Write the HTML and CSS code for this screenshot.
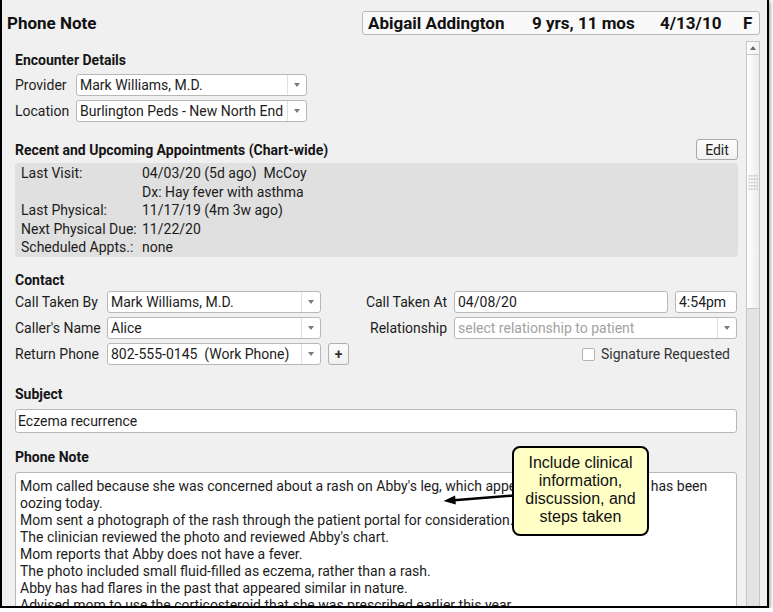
FILE: index.html
```html
<!DOCTYPE html>
<html>
<head>
<meta charset="utf-8">
<title>Phone Note</title>
<link rel="stylesheet" href="styles.css">
</head>
<body>
<div class="window">
  <header class="top">
    <h1 class="title">Phone Note</h1>
    <div class="patient">
      <span class="p-name">Abigail Addington</span>
      <span class="p-age">9 yrs, 11 mos</span>
      <span class="p-dob">4/13/10</span>
      <span class="p-sex">F</span>
    </div>
  </header>
  <div class="main">
    <div class="content">
      <h2 class="heading h-enc">Encounter Details</h2>
      <div class="enc-grid">
        <span class="lbl">Provider</span>
        <div class="select"><span class="sel-text">Mark Williams, M.D.</span><span class="sel-arrow"><i class="tri"></i></span></div>
        <span class="lbl">Location</span>
        <div class="select"><span class="sel-text">Burlington Peds - New North End</span><span class="sel-arrow"><i class="tri"></i></span></div>
      </div>

      <div class="appt-head">
        <h2 class="heading">Recent and Upcoming Appointments (Chart-wide)</h2>
        <button class="btn-edit">Edit</button>
      </div>
      <div class="appt-box">
        <span class="a-lbl">Last Visit:</span><span class="a-val">04/03/20 (5d ago)&nbsp; McCoy</span>
        <span class="a-lbl"></span><span class="a-val">Dx: Hay fever with asthma</span>
        <span class="a-lbl">Last Physical:</span><span class="a-val">11/17/19 (4m 3w ago)</span>
        <span class="a-lbl">Next Physical Due:</span><span class="a-val">11/22/20</span>
        <span class="a-lbl">Scheduled Appts.:</span><span class="a-val">none</span>
      </div>

      <h2 class="heading h-contact">Contact</h2>
      <div class="contact-grid">
        <span class="lbl">Call Taken By</span>
        <div class="select"><span class="sel-text">Mark Williams, M.D.</span><span class="sel-arrow"><i class="tri"></i></span></div>
        <span class="spacer"></span>
        <span class="spacer"></span>
        <span class="lbl lbl-r">Call Taken At</span>
        <div class="date-row">
          <div class="input in-date">04/08/20</div>
          <div class="input in-time">4:54pm</div>
        </div>

        <span class="lbl">Caller's Name</span>
        <div class="select"><span class="sel-text">Alice</span><span class="sel-arrow"><i class="tri"></i></span></div>
        <span class="spacer"></span>
        <span class="spacer"></span>
        <span class="lbl lbl-r">Relationship</span>
        <div class="select"><span class="sel-text placeholder">select relationship to patient</span><span class="sel-arrow"><i class="tri"></i></span></div>

        <span class="lbl">Return Phone</span>
        <div class="select"><span class="sel-text">802-555-0145&nbsp; (Work Phone)</span><span class="sel-arrow"><i class="tri"></i></span></div>
        <span class="spacer"></span>
        <button class="btn-plus">+</button>
        <span class="spacer"></span>
        <div class="sig"><span class="checkbox"></span><span>Signature Requested</span></div>
      </div>

      <h2 class="heading h-subject">Subject</h2>
      <div class="input in-subject">Eczema recurrence</div>

      <h2 class="heading h-note">Phone Note</h2>
      <div class="note">
        <p>Mom called because she was concerned about a rash on Abby's leg, which appeared yesterday, and it has been oozing today.</p>
        <p>Mom sent a photograph of the rash through the patient portal for consideration.</p>
        <p>The clinician reviewed the photo and reviewed Abby's chart.</p>
        <p>Mom reports that Abby does not have a fever.</p>
        <p>The photo included small fluid-filled as eczema, rather than a rash.</p>
        <p>Abby has had flares in the past that appeared similar in nature.</p>
        <p>Advised mom to use the corticosteroid that she was prescribed earlier this year.</p>
      </div>
    </div>
    <div class="scrollbar">
      <div class="sb-up"><i class="sb-tri"></i></div>
      <div class="sb-thumb"><div class="sb-grip"></div></div>
      <div class="sb-track"></div>
    </div>
  </div>

  <svg class="callout-arrow" width="76" height="18" viewBox="0 0 76 18">
    <line x1="74" y1="5.5" x2="14" y2="10.3" stroke="#000" stroke-width="2.6"/>
    <polygon points="3.5,11 15.8,14.6 15.1,5.6" fill="#000"/>
  </svg>
  <div class="callout">Include clinical information, discussion, and steps taken</div>
</div>
</body>
</html>
```

FILE: styles.css
```css
* { box-sizing: border-box; }

html, body {
  margin: 0;
  padding: 0;
  background: #ffffff;
}

body {
  font-family: Roboto, "Liberation Sans", sans-serif;
  font-size: 14px;
  color: #1c1c1c;
}

.window {
  position: relative;
  width: 769px;
  height: 608px;
  background: #f0f0f0;
  border: 2px solid #000;
  border-top: 0;
  box-shadow: 1px 1px 4px rgba(0, 0, 0, 0.45);
  overflow: hidden;
  display: flex;
  flex-direction: column;
}

/* header */
.top {
  flex: none;
  height: 35px;
  display: flex;
  justify-content: space-between;
  align-items: flex-start;
  padding: 11px 7px 0 5px;
}

.title {
  margin: 0;
  font-size: 17px;
  font-weight: 700;
  line-height: 24px;
  color: #111;
}

.patient {
  width: 398px;
  height: 24px;
  display: flex;
  align-items: center;
  padding-left: 5px;
  background: #f9f9f9;
  border: 1px solid #b9b9b9;
  border-radius: 3px;
  font-size: 17px;
  font-weight: 700;
  line-height: 22px;
  color: #111;
  white-space: nowrap;
}

.p-name { width: 164px; }
.p-age { width: 128px; }
.p-dob { width: 83px; }

/* main area */
.main {
  flex: 1;
  min-height: 0;
  display: flex;
}

.content {
  flex: none;
  width: 736px;
  padding-left: 13px;
}

.heading {
  margin: 0;
  font-size: 14px;
  font-weight: 700;
  line-height: 18px;
  color: #151515;
  white-space: nowrap;
}

.h-enc { margin-top: 16px; }
.h-contact { margin-top: 14.5px; }
.h-subject { margin-top: 19.5px; }
.h-note { margin-top: 15.5px; }

.lbl {
  white-space: nowrap;
  line-height: 18px;
}

.lbl-r { text-align: right; }

/* selects and inputs */
.select {
  height: 22px;
  display: flex;
  align-items: stretch;
  background: #fff;
  border: 1px solid #b8b8b8;
  border-radius: 3px;
}

.sel-text {
  flex: 1;
  min-width: 0;
  padding-left: 3px;
  line-height: 20px;
  white-space: nowrap;
  overflow: hidden;
}

.placeholder { color: #a2a2a2; }

.sel-arrow {
  flex: none;
  width: 19px;
  display: flex;
  align-items: center;
  justify-content: center;
  border-left: 1px solid #e0e0e0;
}

.tri {
  display: block;
  width: 0;
  height: 0;
  border-left: 3.5px solid transparent;
  border-right: 3.5px solid transparent;
  border-top: 4px solid #7a7a7a;
}

.input {
  height: 22px;
  background: #fff;
  border: 1px solid #b8b8b8;
  border-radius: 3px;
  padding-left: 3px;
  line-height: 20px;
  white-space: nowrap;
}

/* encounter */
.enc-grid {
  margin-top: 5px;
  display: grid;
  grid-template-columns: 61px 231px;
  grid-auto-rows: 22px;
  row-gap: 4px;
  align-items: center;
}

/* appointments */
.appt-head {
  margin-top: 17px;
  height: 21px;
  display: flex;
  justify-content: space-between;
  align-items: center;
}

.btn-edit {
  width: 42px;
  height: 21px;
  margin: 0;
  padding: 0;
  font-family: Roboto, "Liberation Sans", sans-serif;
  font-size: 14px;
  color: #222;
  background: linear-gradient(#fcfcfc, #f1f1f1);
  border: 1px solid #a9a9a9;
  border-radius: 3px;
}

.appt-box {
  margin-top: 3px;
  width: 723px;
  padding: 1px 6px 0 6px;
  background: #e0e0e0;
  border-radius: 4px;
  display: grid;
  grid-template-columns: 121px 1fr;
  grid-auto-rows: 18.5px;
  line-height: 18.5px;
  white-space: nowrap;
}

/* contact */
.contact-grid {
  margin-top: 2px;
  display: grid;
  grid-template-columns: 92px 214px 7px 21px 98px 290px;
  grid-auto-rows: 22px;
  row-gap: 4px;
  align-items: center;
}

.contact-grid > :nth-child(6),
.contact-grid > :nth-child(12),
.contact-grid > :nth-child(18) {
  margin-left: 7px;
}

.date-row {
  display: flex;
  gap: 7px;
}

.in-date { width: 214px; }
.in-time { width: 62px; }

.btn-plus {
  width: 21px;
  height: 22px;
  margin: 0;
  padding: 0;
  font-family: Roboto, "Liberation Sans", sans-serif;
  font-size: 14px;
  font-weight: 700;
  line-height: 18px;
  color: #333;
  background: linear-gradient(#fcfcfc, #f0f0f0);
  border: 1px solid #b0b0b0;
  border-radius: 3px;
}

.sig {
  display: flex;
  justify-content: flex-end;
  align-items: center;
  gap: 6px;
  padding-right: 7px;
  color: #333;
  white-space: nowrap;
}

.checkbox {
  width: 13px;
  height: 13px;
  background: #fff;
  border: 1px solid #b3b3b3;
  border-radius: 2px;
}

/* subject */
.in-subject {
  margin-top: 6px;
  width: 722px;
  height: 24px;
  line-height: 22px;
  padding-left: 2px;
}

/* note */
.note {
  margin-top: 6px;
  width: 722px;
  height: 200px;
  background: #fff;
  border: 1px solid #b8b8b8;
  border-radius: 3px;
  padding: 5px 4px 0 4px;
  line-height: 17px;
}

.note p { margin: 0; }

/* scrollbar */
.scrollbar {
  flex: none;
  width: 14px;
  margin: 6px 7px 0 8px;
  display: flex;
  flex-direction: column;
  background: #e3e3e3;
  border-left: 1px solid #c6c6c6;
  border-right: 1px solid #c6c6c6;
}

.sb-up {
  flex: none;
  height: 14px;
  display: flex;
  align-items: center;
  justify-content: center;
  background: linear-gradient(to right, #ffffff, #f1f1f1);
  border-top: 1px solid #c6c6c6;
  border-bottom: 1px solid #c6c6c6;
}

.sb-tri {
  display: block;
  width: 0;
  height: 0;
  border-left: 3.5px solid transparent;
  border-right: 3.5px solid transparent;
  border-bottom: 4px solid #6a6a6a;
}

.sb-thumb {
  flex: none;
  height: 254px;
  padding-top: 119px;
  background: linear-gradient(to right, #ffffff, #ececec);
  border-bottom: 1px solid #c6c6c6;
}

.sb-grip {
  width: 10px;
  height: 17px;
  margin: 0 auto;
  background-image: radial-gradient(circle, #b4b4b4 0.7px, transparent 1px);
  background-size: 2.6px 3.4px;
}

.sb-track { flex: 1; }

/* callout */
.callout {
  position: absolute;
  left: 510px;
  top: 446px;
  width: 137px;
  height: 90px;
  padding: 6px 4px 0 4px;
  background: #ffffc6;
  border: 2px solid #000;
  border-radius: 8px;
  font-family: "Liberation Sans", Arial, sans-serif;
  font-size: 16px;
  line-height: 18px;
  text-align: center;
  color: #111;
}

.callout-arrow {
  position: absolute;
  left: 438px;
  top: 490px;
}
```
